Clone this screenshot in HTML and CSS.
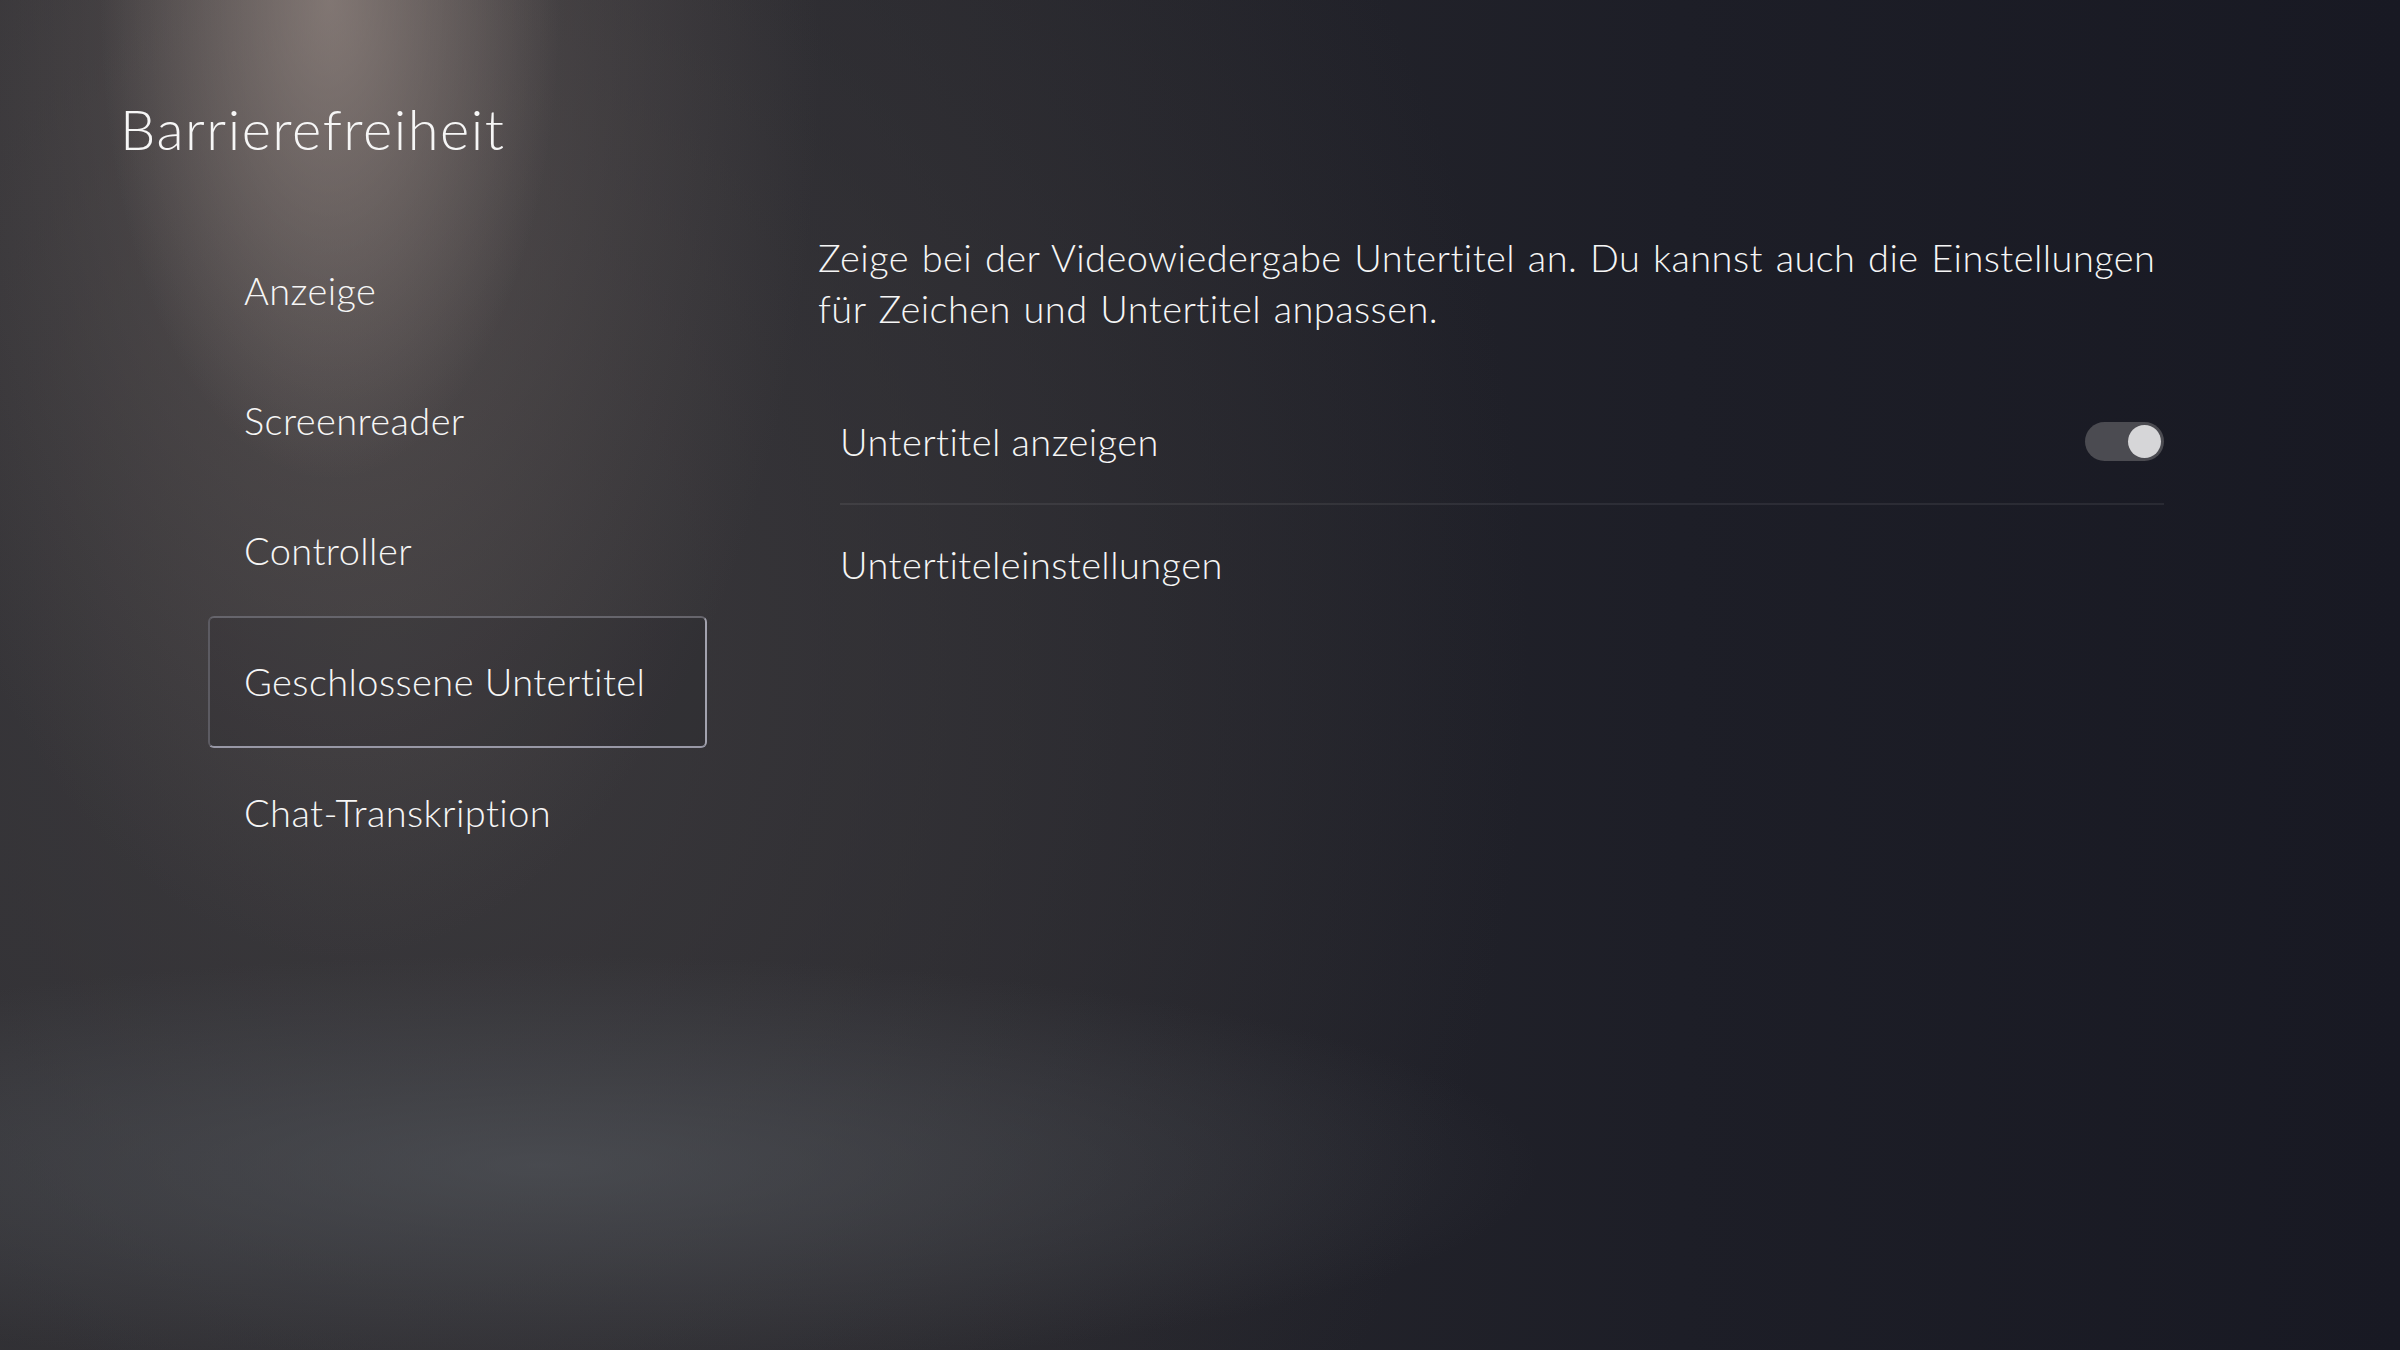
FILE: index.html
```html
<!DOCTYPE html>
<html lang="de">
<head>
    <meta charset="UTF-8">
    <meta name="viewport" content="width=device-width, initial-scale=1.0">
    <title>Barrierefreiheit</title>
    <link rel="stylesheet" href="styles.css">
</head>
<body>
    <div class="page">
        <h1 class="title">Barrierefreiheit</h1>
        <div class="layout">
            <!-- Linke Spalte: Kategorien -->
            <ul class="menu">
                <li class="menu-item">Anzeige</li>
                <li class="menu-item">Screenreader</li>
                <li class="menu-item">Controller</li>
                <li class="menu-item selected">Geschlossene Untertitel</li>
                <li class="menu-item">Chat-Transkription</li>
            </ul>
            <!-- Rechte Spalte: Einstellungen -->
            <div class="detail">
                <p class="description">Zeige bei der Videowiedergabe Untertitel an. Du kannst auch die Einstellungen<br>für Zeichen und Untertitel anpassen.</p>
                <div class="options">
                    <div class="option">
                        <span>Untertitel anzeigen</span>
                        <span class="toggle on"><span class="knob"></span></span>
                    </div>
                    <div class="option">
                        <span>Untertiteleinstellungen</span>
                    </div>
                </div>
            </div>
        </div>
    </div>
</body>
</html>
```

FILE: styles.css
```css
/* Grundlayout */
html, body {
    margin: 0;
    padding: 0;
}
body {
    width: 2400px;
    height: 1350px;
    overflow: hidden;
    font-family: Lato, "Open Sans", sans-serif;
    font-weight: 300;
    letter-spacing: 0.026em;
    color: #f6f6f6;
    background-color: #1b1c25;
    background-image:
        radial-gradient(ellipse 230px 480px at 330px 0px, rgba(160, 146, 140, 0.6), rgba(160, 146, 140, 0) 100%),
        radial-gradient(ellipse 480px 900px at 340px 60px, rgba(112, 102, 99, 0.55), rgba(112, 102, 99, 0) 100%),
        radial-gradient(ellipse 1000px 210px at 540px 1165px, rgba(86, 90, 96, 0.6), rgba(86, 90, 96, 0) 100%),
        radial-gradient(ellipse 1150px 1350px at 380px 650px, rgba(60, 58, 61, 0.95), rgba(60, 58, 61, 0) 100%),
        linear-gradient(to right, #2b2b30 0%, #26262c 40%, #1d1e27 70%, #181923 100%);
}
.page {
    padding: 95px 0 0 120px;
}
.title {
    margin: 0;
    font-size: 56px;
    font-weight: 300;
    line-height: 1.2;
    letter-spacing: 0.027em;
}
.layout {
    display: flex;
    margin-top: 64px;
}
.menu {
    list-style: none;
    margin: 0 0 0 88px;
    padding: 0;
    width: 499px;
}
.menu-item {
    box-sizing: border-box;
    height: 130px;
    display: flex;
    align-items: center;
    padding-left: 34px;
    font-size: 38px;
    line-height: 1.2;
    border: 2px solid transparent;
    border-radius: 6px;
}
.menu-item.selected {
    height: 132px;
    border-color: #66656c #a2a2ae #9898a6 #5c5b62;
    background: rgba(30, 30, 34, 0.15);
}
.detail {
    margin-left: 111px;
    width: 1346px;
    padding-top: 6px;
}
.description {
    margin: 0;
    font-size: 38px;
    line-height: 51px;
    word-spacing: 2px;
    white-space: nowrap;
}
.options {
    margin-top: 46px;
    padding-left: 22px;
}
.option {
    height: 123px;
    display: flex;
    align-items: center;
    justify-content: space-between;
    font-size: 38px;
    line-height: 1.2;
}
.option + .option {
    height: 119px;
    border-top: 2px solid rgba(255, 255, 255, 0.07);
}
.toggle {
    box-sizing: border-box;
    width: 79px;
    height: 39px;
    border-radius: 20px;
    background: #4b4b51;
    display: flex;
    align-items: center;
    padding: 0 3px;
}
.toggle.on {
    justify-content: flex-end;
}
.knob {
    width: 33px;
    height: 33px;
    border-radius: 50%;
    background: #d6d6d8;
}
```
